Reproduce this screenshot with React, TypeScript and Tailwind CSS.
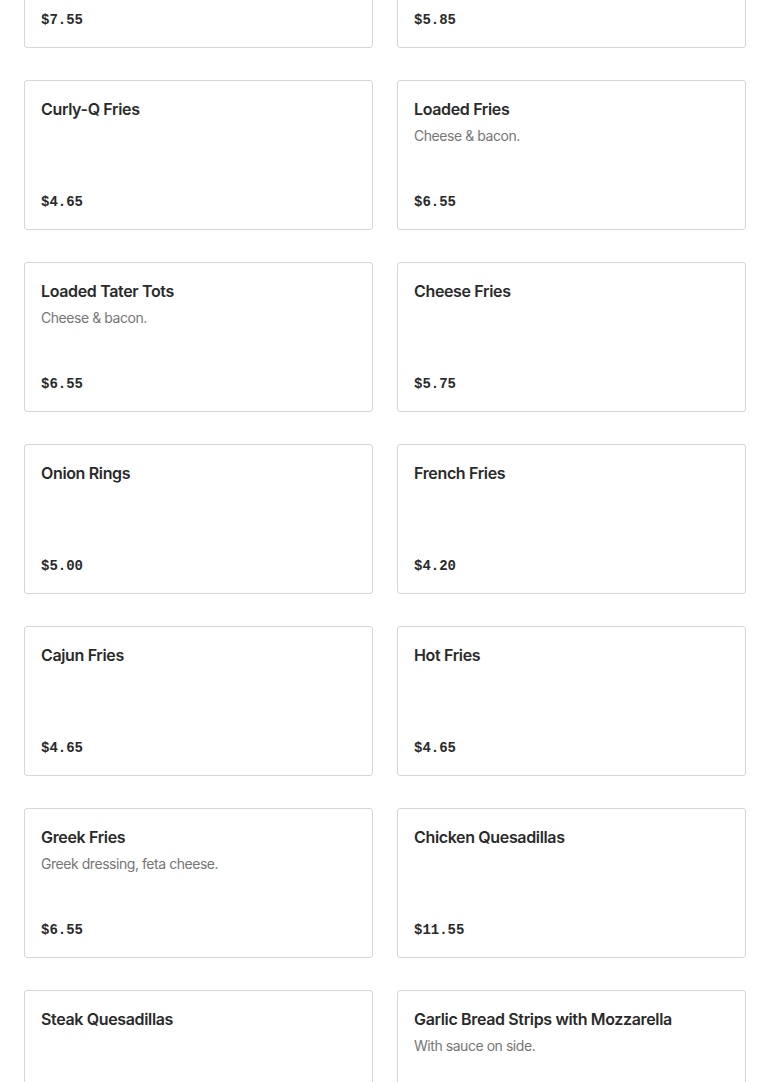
const items = [
  { name: "Item", desc: "", price: "$7.55" },
  { name: "Item", desc: "", price: "$5.85" },
  { name: "Curly-Q Fries", desc: "", price: "$4.65" },
  { name: "Loaded Fries", desc: "Cheese & bacon.", price: "$6.55" },
  { name: "Loaded Tater Tots", desc: "Cheese & bacon.", price: "$6.55" },
  { name: "Cheese Fries", desc: "", price: "$5.75" },
  { name: "Onion Rings", desc: "", price: "$5.00" },
  { name: "French Fries", desc: "", price: "$4.20" },
  { name: "Cajun Fries", desc: "", price: "$4.65" },
  { name: "Hot Fries", desc: "", price: "$4.65" },
  { name: "Greek Fries", desc: "Greek dressing, feta cheese.", price: "$6.55" },
  { name: "Chicken Quesadillas", desc: "", price: "$11.55" },
  { name: "Steak Quesadillas", desc: "", price: "$11.55" },
  { name: "Garlic Bread Strips with Mozzarella", desc: "With sauce on side.", price: "$6.55" },
];

export default function App() {
  return (
    <div className="h-[1082px] overflow-hidden bg-white" style={{ fontFamily: "Inter, 'Liberation Sans', sans-serif" }}>
      <div className="-mt-[102px] grid grid-cols-2 gap-x-6 gap-y-8 px-6">
        {items.map((item, i) => (
          <div key={i} className="flex h-[150px] flex-col justify-between rounded-[3px] border border-[#d6d6d6] bg-white px-4 pt-4 pb-[17px]">
            <div>
              <div className="text-[16px] font-semibold leading-6 tracking-[-0.35px] text-[#2a2a2a]">{item.name}</div>
              {item.desc && <div className="mt-[5px] text-[14px] leading-5 tracking-[-0.45px] text-[#767676]">{item.desc}</div>}
            </div>
            <div className="text-[14px] font-bold leading-5 text-[#2a2a2a]" style={{ fontFamily: "'Liberation Mono', monospace" }}>
              {item.price}
            </div>
          </div>
        ))}
      </div>
    </div>
  );
}
